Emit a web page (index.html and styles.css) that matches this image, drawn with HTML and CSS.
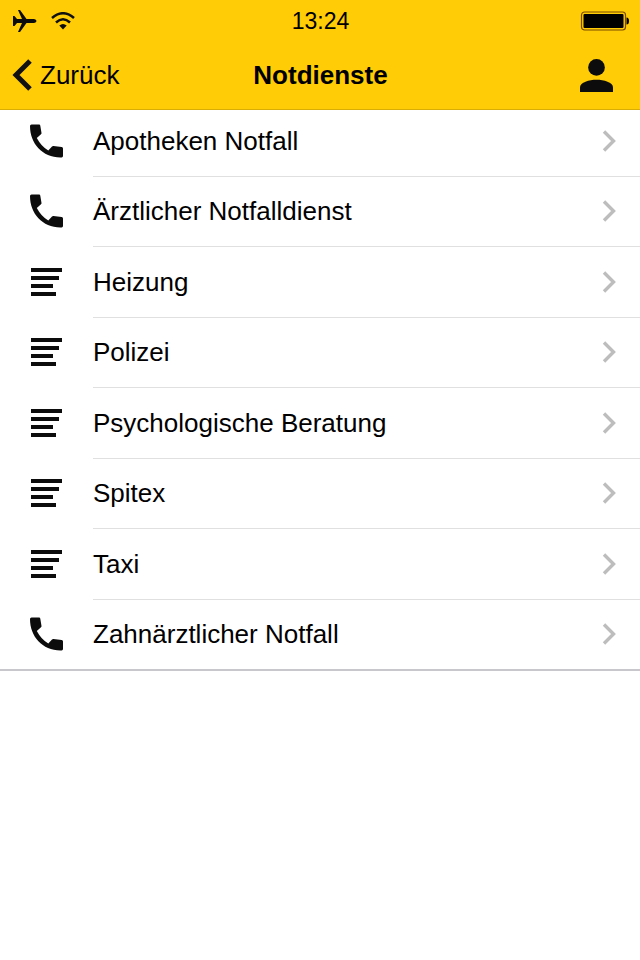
FILE: index.html
```html
<!DOCTYPE html>
<html lang="de">
<head>
    <meta charset="UTF-8">
    <meta name="viewport" content="width=device-width, initial-scale=1.0">
    <title>Notdienste</title>
    <link rel="stylesheet" href="styles.css">
</head>
<body>
    <svg class="symbols" aria-hidden="true">
        <symbol id="phone" viewBox="0 0 44 44">
            <path d="M7.500 5.500h7.500q1.200 0 1.300 1.200l1.200 7.300q.1.800-.5 1.300l-4.200 3.700q4.500 8.500 11.500 12.500l3.700-4q.6-.6 1.400-.5l8.300 1q1.300.2 1.300 1.500v7.500q0 1.400-1.400 1.400C19 39 6 25 6 7q0-1.500 1.500-1.500z"/>
        </symbol>
        <symbol id="lines" viewBox="0 0 44 44">
            <path d="M7 8h31v4H7zM7 16h28v4H7zM7 24h22v4H7zM7 32h25v4H7z"/>
        </symbol>
        <symbol id="arrow" viewBox="0 0 14 22">
            <path d="M2 1.500L11.500 11L2 20.500" fill="none" stroke="#bdbdbd" stroke-width="3.400"/>
        </symbol>
    </svg>

    <header class="header">
        <div class="status">
            <div class="status-left">
                <svg width="25" height="22" viewBox="0 0 25 22" aria-label="Flugmodus">
                    <path d="M1 6h1.500l2.500 3h5L6 0h2l6.500 9H22q2.500.5 2.500 2T22 13h-7.500L8 22H6l4-9H5l-2.500 3H1z"/>
                </svg>
                <svg width="24" height="18" viewBox="0 0 24 18" aria-label="WLAN">
                    <path d="M1 6Q12-3.500 23 6M5 10.500Q12 4 19 10.500" fill="none" stroke="#111" stroke-width="2.500"/>
                    <path d="M8.300 13.500Q12 10.500 15.700 13.500L12 17.500z"/>
                </svg>
            </div>
            <span class="time">13:24</span>
            <svg class="battery" width="49" height="20" viewBox="0 0 49 20" aria-label="Akku">
                <rect x="1.500" y="1" width="44" height="18" rx="3" fill="none" stroke="#7a4a00" stroke-width="1.200"/>
                <rect x="3.500" y="3" width="40" height="14" rx="1"/>
                <path d="M46.500 6.500q2.500 0 2.500 3.500t-2.500 3.500z"/>
            </svg>
        </div>
        <nav class="navbar">
            <a class="back" href="#">
                <svg width="20" height="32" viewBox="0 0 20 32" aria-hidden="true">
                    <path d="M18 2L4 16L18 30" fill="none" stroke="#111" stroke-width="5"/>
                </svg>
                Zurück
            </a>
            <h1>Notdienste</h1>
            <button class="profile" type="button" aria-label="Profil">
                <svg width="33" height="33" viewBox="4 4 16 16">
                    <circle cx="12" cy="8.100" r="4.050"/>
                    <path d="M12 14c-3.500 0-8 1.200-8 3.700V20h16v-2.300C20 15.200 15.500 14 12 14z"/>
                </svg>
            </button>
        </nav>
    </header>

    <ul class="list">
        <li><a href="#"><svg class="icon"><use href="#phone"/></svg><span>Apotheken Notfall</span><svg class="arrow"><use href="#arrow"/></svg></a></li>
        <li><a href="#"><svg class="icon"><use href="#phone"/></svg><span>Ärztlicher Notfalldienst</span><svg class="arrow"><use href="#arrow"/></svg></a></li>
        <li><a href="#"><svg class="icon"><use href="#lines"/></svg><span>Heizung</span><svg class="arrow"><use href="#arrow"/></svg></a></li>
        <li><a href="#"><svg class="icon"><use href="#lines"/></svg><span>Polizei</span><svg class="arrow"><use href="#arrow"/></svg></a></li>
        <li><a href="#"><svg class="icon"><use href="#lines"/></svg><span>Psychologische Beratung</span><svg class="arrow"><use href="#arrow"/></svg></a></li>
        <li><a href="#"><svg class="icon"><use href="#lines"/></svg><span>Spitex</span><svg class="arrow"><use href="#arrow"/></svg></a></li>
        <li><a href="#"><svg class="icon"><use href="#lines"/></svg><span>Taxi</span><svg class="arrow"><use href="#arrow"/></svg></a></li>
        <li><a href="#"><svg class="icon"><use href="#phone"/></svg><span>Zahnärztlicher Notfall</span><svg class="arrow"><use href="#arrow"/></svg></a></li>
    </ul>
</body>
</html>
```

FILE: styles.css
```css
body {
    margin: 0;
    background-color: #fff;
    color: #000;
    font-family: "Helvetica Neue", "Liberation Sans", Arial, sans-serif;
    font-size: 26px;
    line-height: 32px;
}

a {
    color: inherit;
    text-decoration: none;
}

svg {
    display: block;
    flex: none;
    fill: #0c0c0c;
}

.symbols {
    display: none;
}

.header {
    position: relative;
    z-index: 1;
    background-color: #ffcc05;
    border-bottom: 1px solid #d9ad04;
}

.status,
.navbar {
    display: grid;
    grid-template-columns: 1fr auto 1fr;
    align-items: center;
    padding: 0 11px 0 12px;
}

.status {
    height: 41px;
}

.status-left {
    display: flex;
    align-items: center;
    gap: 14px;
}

.time {
    font-size: 23px;
}

.battery {
    justify-self: end;
    fill: #000;
}

.navbar {
    height: 68px;
}

.back {
    display: flex;
    align-items: center;
    gap: 8px;
}

h1 {
    margin: 0;
    font-size: 26px;
    font-weight: bold;
}

.profile {
    justify-self: end;
    margin-right: 16px;
    padding: 0;
    border: none;
    background: none;
    cursor: pointer;
}

/* the first row starts slightly under the header */
.list {
    margin: -4px 0 0;
    padding: 0;
    list-style: none;
    border-bottom: 2px solid #c8c7cc;
}

.list li {
    background: linear-gradient(#e0e0e0, #e0e0e0) 93px 100% / 100% 1px no-repeat;
}

.list li:last-child {
    background: none;
}

.list a {
    display: flex;
    align-items: center;
    box-sizing: border-box;
    height: 70px;
    padding: 0 24px 2px;
}

.list li:nth-child(odd) a {
    height: 71px;
}

.list li:last-child a {
    height: 69px;
}

.list span {
    flex: 1;
    margin-left: 25px;
}

.icon {
    width: 44px;
    height: 44px;
}

.arrow {
    width: 14px;
    height: 22px;
}
```
